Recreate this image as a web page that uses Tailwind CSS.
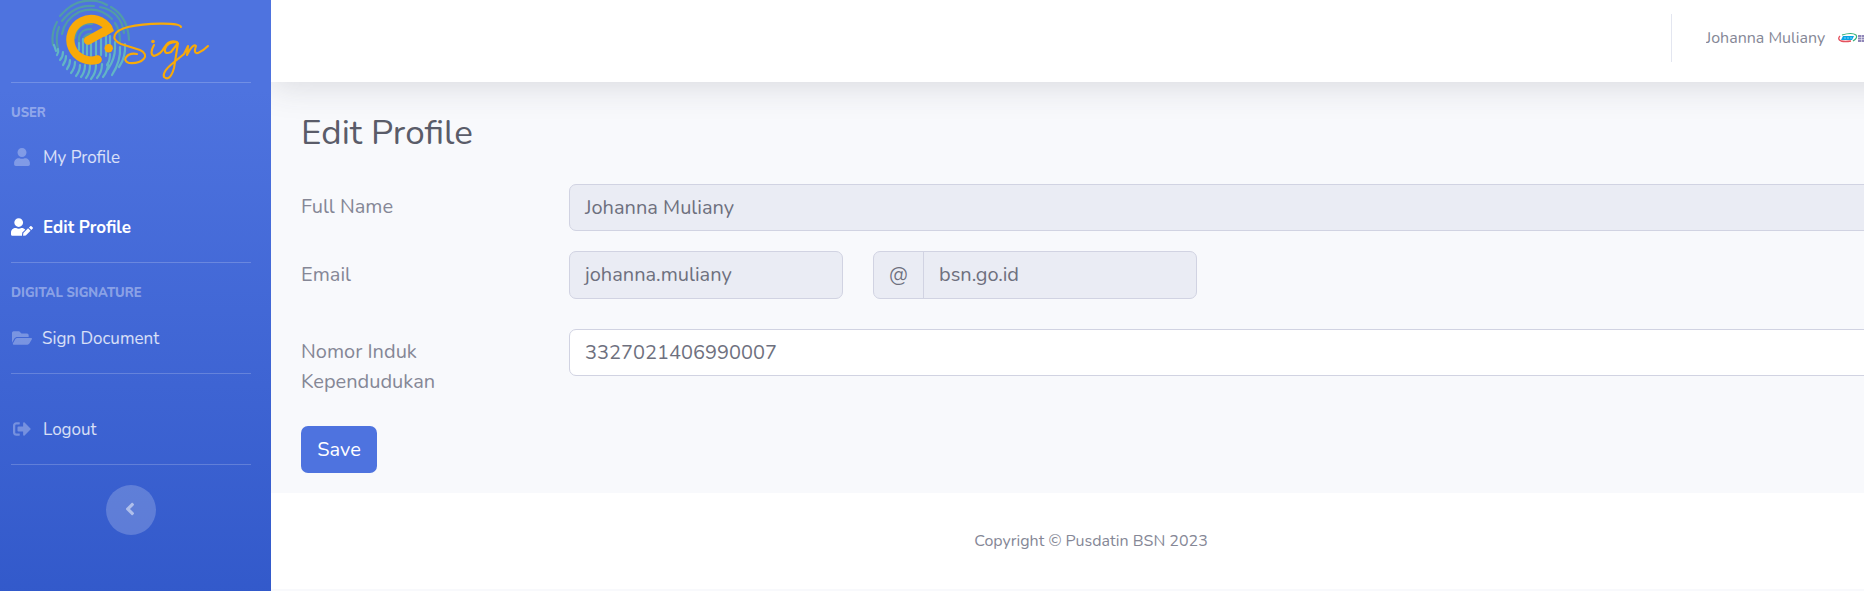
<!DOCTYPE html>
<html lang="id">
<head>
<meta charset="utf-8">
<title>Edit Profile</title>
<script src="https://cdn.jsdelivr.net/npm/@tailwindcss/browser@4"></script>
</head>
<body class="h-[591px] overflow-hidden bg-[#f8f9fc] font-[Nunito,Lato,sans-serif] text-[#858796]">
<div class="flex h-full">
  <aside class="flex w-[271px] shrink-0 flex-col bg-[#4e73df] bg-[linear-gradient(180deg,#4e73df_10%,#224abe_100%)] bg-[length:100%_900px] pr-5 pl-[11px] text-[17px] text-white/80">
    <a class="h-[82px] shrink-0">
      <svg class="-ml-[11px] overflow-visible" width="271" height="82" viewBox="0 0 271 82" fill="none" stroke-linecap="round" stroke-linejoin="round">
        <g stroke="#519ba9" stroke-width="2.2">
          <path d="M53 45Q51 33 57 22M60 16Q75-2 96 1Q102 2 107 5M111 7Q128 17 129 40"/>
          <path d="M58 49Q55 37 59 27M62 21Q75 4 94 6M100 7Q121 11 124 33"/>
          <path d="M62 34Q65 19 79 12Q98 5 112 19M115 23Q120 30 120 41"/>
          <path d="M75 38Q76 27 86 24L92 24M79 44V37Q81 29 91 29M83 48V39Q86 33 93 34"/>
        </g>
        <g stroke="#62b5c5" stroke-width="2.2">
          <path d="M54 45L56 51M58 49Q59 52 57 55M63 52Q63 57 60 60M66 56Q66 61 63 65M70 60Q70 65 67 69M75 62Q75 68 71 73M80 65Q80 71 76 76M85 65Q85 72 81 77M90 65Q90 73 86 78M96 65Q96 73 91 79M102 64Q102 72 97 78M108 63Q108 71 103 77M115 48Q115 59 108 69M120 47Q121 61 112 75M125 44Q126 57 119 67"/>
          <path d="M79 43V50M83 39V54M87 43V55M91 43V56M96 41V55M101 39V55M106 34V56M110 36V45M110 54Q110 61 107 65M115 42V49"/>
        </g>
        <path d="M109 29A20.800 20.800 0 1 0 97.500 59.500" stroke="#f8aa08" stroke-width="8.200" stroke-linecap="butt"/>
        <path d="M97.500 59.500L97.600 59.500M88 40.500L107 30" stroke="#f8aa08" stroke-width="8.500"/>
        <path d="M104 27L110.500 24Q113 28 114 31L104 37Z" fill="#f8aa08"/>
        <circle cx="108.700" cy="48.300" r="4.200" fill="#f8aa08"/>
        <g stroke="#f8aa08" stroke-width="2.100">
          <path d="M181 27C180 22 145 23 128 27C113 31 110 39 121 44L140 50C151 55 143 64 129 63C121 61 127 52 137 54"/>
          <path d="M154 45Q149 54 154 56Q161 54 164 48Q169 39 177 42Q167 42 165 49Q164 55 171 52L178 43L174 68Q170 82 164 77Q162 72 173 63L184 54L188 46L187 55Q193 43 196 46Q193 54 198 53Q203 51 208 46"/>
        </g>
        <circle cx="153" cy="41.500" r="1.800" fill="#f8aa08"/>
      </svg>
    </a>
    <hr class="shrink-0 border-white/20">
    <div class="mt-[21px] h-4 shrink-0 text-[13px] leading-4 font-extrabold text-white/40"><div class="pt-px">USER</div></div>
    <a class="mt-[25px] flex h-6 shrink-0 items-center">
      <span class="flex w-[22px] justify-center"><svg class="h-[18px] w-4 fill-white/30" viewBox="0 0 448 512"><path d="M224 256c70.7 0 128-57.3 128-128S294.700 0 224 0 96 57.300 96 128s57.300 128 128 128zm89.600 32h-16.700c-22.200 10.200-46.900 16-72.900 16s-50.600-5.800-72.900-16h-16.700C60.200 288 0 348.200 0 422.400V464c0 26.500 21.500 48 48 48h352c26.500 0 48-21.500 48-48v-41.600c0-74.200-60.200-134.400-134.400-134.400z"/></svg></span>
      <span class="ml-2.5 pt-0.5">My Profile</span>
    </a>
    <a class="mt-[46px] flex h-6 shrink-0 items-center font-bold text-white">
      <span class="flex w-[22px] justify-center"><svg class="h-[18px] w-[22px] fill-white" viewBox="0 0 640 512"><path d="M224 256c70.700 0 128-57.300 128-128S294.700 0 224 0 96 57.300 96 128s57.300 128 128 128zm89.600 32h-16.700c-22.200 10.200-46.900 16-72.900 16s-50.600-5.800-72.900-16h-16.700C60.200 288 0 348.200 0 422.400V464c0 26.500 21.500 48 48 48h274.900c-2.400-6.800-3.400-14-2.600-21.300l6.800-60.900 1.200-11.100 7.900-7.900 77.300-77.300c-24.500-27.700-60-45.500-99.900-45.500zm45.300 145.300l-6.800 61c-1.100 10.200 7.500 18.800 17.600 17.600l60.900-6.800 137.900-137.900-71.700-71.700-137.900 137.800zM633 268.900L595.100 231c-9.300-9.300-24.500-9.300-33.800 0l-37.800 37.800-4.100 4.100 71.800 71.700 41.800-41.800c9.300-9.400 9.300-24.500 0-33.900z"/></svg></span>
      <span class="ml-2.5 pt-0.5">Edit Profile</span>
    </a>
    <hr class="mt-[23px] shrink-0 border-white/20">
    <div class="mt-[21px] h-4 shrink-0 text-[13px] leading-4 font-extrabold text-white/40"><div class="pt-px">DIGITAL SIGNATURE</div></div>
    <a class="mt-[26px] flex h-6 shrink-0 items-center">
      <span class="flex w-[22px] justify-center"><svg class="h-[18px] w-5 fill-white/30" viewBox="0 0 576 512"><path d="M572.694 292.093L500.270 416.248A63.997 63.997 0 0 1 444.989 448H45.025c-18.523 0-30.064-20.093-20.731-36.093l72.424-124.155A64 64 0 0 1 152 256h399.964c18.523 0 30.064 20.093 20.730 36.093zM152 224h328v-48c0-26.510-21.490-48-48-48H272l-64-64H48C21.490 64 0 85.490 0 112v278.046l69.077-118.418C86.214 242.250 117.989 224 152 224z"/></svg></span>
      <span class="ml-[9px] pt-0.5">Sign Document</span>
    </a>
    <hr class="mt-[23px] shrink-0 border-white/20">
    <a class="mt-[43px] flex h-6 shrink-0 items-center">
      <span class="flex w-[22px] justify-center"><svg class="h-[18px] w-[18px] fill-white/30" viewBox="0 0 512 512"><path d="M497 273L329 441c-15 15-41 4.500-41-17v-96H152c-13.300 0-24-10.700-24-24v-96c0-13.300 10.700-24 24-24h136V88c0-21.400 25.900-32 41-17l168 168c9.300 9.400 9.300 24.600 0 34zM192 436v-40c0-6.600-5.400-12-12-12H96c-17.700 0-32-14.300-32-32V160c0-17.700 14.300-32 32-32h84c6.600 0 12-5.400 12-12V76c0-6.600-5.400-12-12-12H96c-53 0-96 43-96 96v192c0 53 43 96 96 96h84c6.600 0 12-5.400 12-12z"/></svg></span>
      <span class="ml-2.5 pt-0.5">Logout</span>
    </a>
    <hr class="mt-[23px] shrink-0 border-white/20">
    <button class="mt-5 flex size-[50px] shrink-0 items-center justify-center self-center rounded-full bg-white/20"><svg class="mr-0.5 mb-[3px] h-5 w-2.5 fill-white/50" viewBox="0 0 256 512"><path d="M31.700 239l136-136c9.400-9.400 24.600-9.400 33.900 0l22.600 22.600c9.400 9.400 9.400 24.600 0 33.900L127.900 256l96.400 96.400c9.400 9.400 9.400 24.600 0 33.900L201.700 409c-9.400 9.400-24.600 9.400-33.900 0l-136-136c-9.500-9.400-9.500-24.600-.1-34z"/></svg></button>
  </aside>

  <div class="flex min-w-0 flex-1 flex-col overflow-hidden">
    <header class="flex h-[82px] w-[1642px] shrink-0 justify-end bg-white pr-[49px] shadow-[0_3px_35px_0_rgba(58,59,69,0.17)]">
      <div class="mt-3.5 h-12 w-px bg-[#e3e6f0]"></div>
      <div class="ml-[34px] flex h-[76px] w-[158px] items-center overflow-hidden">
        <span class="w-[132px] shrink-0 text-base whitespace-nowrap">Johanna Muliany</span>
        <svg class="shrink-0" width="40" height="12" viewBox="0 0 40 12" fill="none">
          <path d="M2 4Q-1 7 3 9Q7 10 13 9" stroke="#e4505d" stroke-width="1.300"/>
          <path d="M4 3Q14 0 18 3Q20 6 15 9" stroke="#38b277" stroke-width="1.200"/>
          <path d="M5 4H16L14 8H3Z" fill="#08a5e5"/>
          <path d="M6 6H14" stroke="#7fd4f5" stroke-width="1" stroke-dasharray="2 1"/>
          <path d="M20 4H32M20 6.500H32M20 9H32" stroke="#8f86b8" stroke-width="1.900" stroke-dasharray="3 .5"/>
        </svg>
      </div>
    </header>

    <main class="h-[411px] shrink-0 px-[30px] pt-[30px] text-xl leading-[30px]">
      <h1 class="h-[42px] text-[35px] leading-[42px] font-normal text-[#5a5c69]">Edit Profile</h1>
      <form class="mt-[30px] w-[1608px]">
        <div class="flex h-[67px]">
          <label class="w-[268px] pt-2">Full Name</label>
          <div class="flex h-[47px] flex-1 items-center rounded-[7px] border border-[#d1d3e2] bg-[#eaecf4] px-[15px] text-[#6e707e]">Johanna Muliany</div>
        </div>
        <div class="flex h-[78px]">
          <label class="w-[268px] pt-[9px]">Email</label>
          <div class="flex h-12 w-[274px] items-center rounded-[7px] border border-[#d1d3e2] bg-[#eaecf4] px-[15px] text-[#6e707e]">johanna.muliany</div>
          <div class="ml-[30px] flex h-12 w-[324px] rounded-[7px] border border-[#d1d3e2] bg-[#eaecf4] text-[#6e707e]">
            <span class="flex w-[50px] items-center justify-center border-r border-[#d1d3e2]">@</span>
            <span class="flex items-center pl-[15px]">bsn.go.id</span>
          </div>
        </div>
        <div class="flex h-[97px]">
          <label class="w-[268px] pt-2">Nomor Induk<br>Kependudukan</label>
          <div class="flex h-[47px] flex-1 items-center rounded-[7px] border border-[#d1d3e2] bg-white px-[15px] text-[#6e707e]">3327021406990007</div>
        </div>
        <button class="flex h-[47px] w-[76px] items-center justify-center rounded-[7px] bg-[#4e73df] text-white">Save</button>
      </form>
    </main>

    <footer class="flex h-24 w-[1640px] shrink-0 items-center justify-center bg-white text-base">Copyright © Pusdatin BSN 2023</footer>
  </div>
</div>
</body>
</html>
